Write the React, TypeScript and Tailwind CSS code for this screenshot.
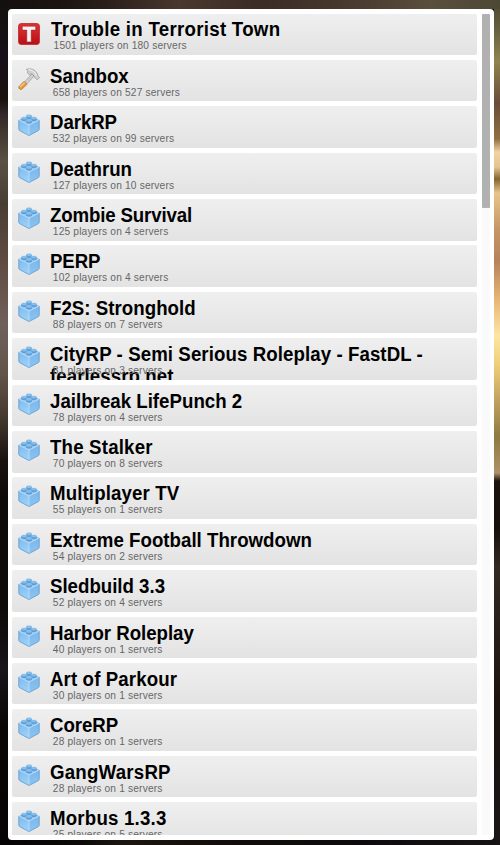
type Game = { name: string; players: number; servers: number; tracking: string; icon?: 'ttt' | 'hammer' };

const games: Game[] = [
  { name: 'Trouble in Terrorist Town', players: 1501, servers: 180, icon: 'ttt', tracking: 'tracking-[0.29px]' },
  { name: 'Sandbox', players: 658, servers: 527, icon: 'hammer', tracking: 'tracking-[-0.03px]' },
  { name: 'DarkRP', players: 532, servers: 99, tracking: 'tracking-[-0.08px]' },
  { name: 'Deathrun', players: 127, servers: 10, tracking: 'tracking-[0px]' },
  { name: 'Zombie Survival', players: 125, servers: 4, tracking: 'tracking-[-0.16px]' },
  { name: 'PERP', players: 102, servers: 4, tracking: 'tracking-[-0.13px]' },
  { name: 'F2S: Stronghold', players: 88, servers: 7, tracking: 'tracking-[0.03px]' },
  { name: 'CityRP - Semi Serious Roleplay - FastDL - fearlessrp.net', players: 81, servers: 3, tracking: 'tracking-[0.08px]' },
  { name: 'Jailbreak LifePunch 2', players: 78, servers: 4, tracking: 'tracking-[0.01px]' },
  { name: 'The Stalker', players: 70, servers: 8, tracking: 'tracking-[0.19px]' },
  { name: 'Multiplayer TV', players: 55, servers: 1, tracking: 'tracking-[0.12px]' },
  { name: 'Extreme Football Throwdown', players: 54, servers: 2, tracking: 'tracking-[0.02px]' },
  { name: 'Sledbuild 3.3', players: 52, servers: 4, tracking: 'tracking-[-0.01px]' },
  { name: 'Harbor Roleplay', players: 40, servers: 1, tracking: 'tracking-[-0.03px]' },
  { name: 'Art of Parkour', players: 30, servers: 1, tracking: 'tracking-[0.12px]' },
  { name: 'CoreRP', players: 28, servers: 1, tracking: 'tracking-[-0.07px]' },
  { name: 'GangWarsRP', players: 28, servers: 1, tracking: 'tracking-[0.22px]' },
  { name: 'Morbus 1.3.3', players: 25, servers: 5, tracking: 'tracking-[0.2px]' },
];

function BrickIcon() {
  return (
    <svg viewBox="0 0 22 22" className="h-[22px] w-[22px]">
      <defs>
        <linearGradient id="brickLeft" x2="0.3" y2="1">
          <stop stopColor="#7db9ec" />
          <stop offset="1" stopColor="#9bd0f8" />
        </linearGradient>
        <linearGradient id="brickRight" x2="0" y2="1">
          <stop stopColor="#7ab6ea" />
          <stop offset="1" stopColor="#8cc5f3" />
        </linearGradient>
      </defs>
      <path d="M.8 5.8 11 10.8v10.7L1.6 16.6Q.8 16.2.8 15Z" fill="url(#brickLeft)" />
      <path d="M21.2 5.8 11 10.8v10.7l9.4-4.9q.8-.4.8-1.6Z" fill="url(#brickRight)" />
      <path d="M.8 5.8 11 1.4l10.2 4.4L11 10.8Z" fill="#92c7f1" />
      <path d="M.8 6v9.4q0 .8.8 1.2L11 21.5l9.4-4.9q.8-.4.8-1.2V6" fill="none" stroke="#659fd1" strokeWidth=".9" />
      <path d="M1.2 6.2 11 11l9.8-4.8M11 11v9.8" fill="none" stroke="#b3dafa" strokeWidth="1" />
      <g fill="#609dd2">
        <path d="M8.1 1.8v2.1c0 1.5 5.8 1.5 5.8 0V1.8z" />
        <path d="M3.3 4V6.1c0 1.5 5.8 1.5 5.8 0V4z" />
        <path d="M12.9 4V6.1c0 1.5 5.8 1.5 5.8 0V4z" />
        <path d="M8.1 6.3v2.1c0 1.5 5.8 1.5 5.8 0V6.3z" />
      </g>
      <g fill="#86bfee">
        <ellipse cx="11" cy="1.9" rx="2.9" ry="1.3" />
        <ellipse cx="6.2" cy="4.1" rx="2.9" ry="1.3" />
        <ellipse cx="15.8" cy="4.1" rx="2.9" ry="1.3" />
        <ellipse cx="11" cy="6.4" rx="2.9" ry="1.3" />
      </g>
    </svg>
  );
}

function HammerIcon() {
  return (
    <svg viewBox="0 0 22 22" className="h-[22px] w-[22px]">
      <path d="m6.3 14.2 7.6-8.3 2.3 2-7.6 8.3Z" fill="#d0d0d0" stroke="#8b8b8b" strokeWidth=".6" />
      <path d="m.7 18.9 5.3-5.6 3.2 2.9-5.5 5.2c-1 .9-3.9-1.3-3-2.5Z" fill="#e39a3c" stroke="#a8743a" strokeWidth=".6" />
      <path d="m2.3 18.9 4.4-4.3" stroke="#ffd083" strokeWidth="1.1" />
      <path d="M8.3 1.3c3-.9 6.2-.5 8.4 1.2l2.2 2.2.8 2.6 1.8 2.2-2.2 2.3-2.6-2.2-.4-1.4-2.6-2.4-2.3 1.1-2-2.1c.8-1.5-.1-2.8-1.1-3.5Z" fill="#cfd0d1" stroke="#8a8c8f" strokeWidth=".6" />
      <path d="M10.5 1.6c3.6.2 5.7 2 6.9 3.7l1 2.5" fill="none" stroke="#f7f7f7" strokeWidth="1" />
    </svg>
  );
}

function TerrorIcon() {
  return (
    <svg viewBox="0 0 22 22" className="h-[22px] w-[22px]">
      <defs>
        <linearGradient id="red" x2="0" y2="1">
          <stop stopColor="#df3236" />
          <stop offset="1" stopColor="#b80f14" />
        </linearGradient>
      </defs>
      <rect x=".6" y=".6" width="20.8" height="20.8" rx="2.5" fill="url(#red)" stroke="#c0282c" strokeWidth=".9" />
      <path d="M4.3 3.2h13.4v3.9h-4.5v11.8H8.8V7.1H4.3Z" fill="#f7f1f1" stroke="#951a1d" strokeWidth=".5" />
    </svg>
  );
}

const icons = { ttt: TerrorIcon, hammer: HammerIcon, brick: BrickIcon };

function GameRow({ game }: { game: Game }) {
  const Icon = icons[game.icon ?? 'brick'];
  const first = game.icon === 'ttt';
  const iconMargin = first ? 'mt-[4px]' : game.icon === 'hammer' ? 'mt-[3.5px]' : 'mt-[3px]';
  return (
    <div className="flex h-[41.5px] shrink-0 overflow-hidden rounded-[2px] bg-linear-to-b from-[#efefef] to-[#e3e3e3] pt-[5px] pl-[5.5px]">
      <div className={`${iconMargin} mr-[10.5px] h-[22px] w-[22px] shrink-0`}>
        <Icon />
      </div>
      <div className={`w-[400px] ${first ? '-mt-[1px] pl-[0.8px]' : ''}`}>
        <div className={`h-[22px] origin-left scale-x-[0.963] text-[19.4px] leading-[22px] font-bold text-black ${game.tracking}`}>
          {game.name}
        </div>
        <div className="relative pl-[2.8px] text-[10.2px] leading-[11px] tracking-[0.17px] text-[#666]">
          {`${game.players} players on ${game.servers} servers`}
        </div>
      </div>
    </div>
  );
}

export default function App() {
  return (
    <div className="flex h-[845px] w-[500px] flex-col overflow-hidden bg-[#080609] font-['Liberation_Sans',Arial,sans-serif]">
      <div className="h-[8.5px] shrink-0 bg-[linear-gradient(to_right,#14100f_0px,#1b1412_60px,#2b201b_110px,#4a382e_180px,#3b2c24_260px,#46382d_340px,#5a4e3e_430px,#4d4833_500px)]" />
      <div className="flex h-[831.2px] shrink-0">
        <div className="w-[7.5px] shrink-0 bg-[linear-gradient(to_bottom,#14110f_0px,#17101a_50px,#1a110d_90px,#33272a_105px,#453931_125px,#5a5043_152px,#493e32_195px,#5f4a40_250px,#70605a_315px,#62544a_365px,#44382d_410px,#1a1310_450px,#0e0a08_490px,#0d0a09_600px,#17151a_660px,#090605_720px,#060404_831px)]" />
        <main className="flex w-[486.5px] shrink-0 justify-between rounded-[4px] bg-white py-[5px] pr-[4px] pl-[4.5px]">
          <div className="flex h-[821px] w-[465px] flex-col gap-[4.9px] overflow-hidden">
            {games.map((game) => (
              <GameRow key={game.name} game={game} />
            ))}
          </div>
          <div className="h-[821px] w-[8px] bg-[#fafafa]">
            <div className="h-[194.5px] rounded-[1px] bg-[#b1b1b1]" />
          </div>
        </main>
        <div className="grow bg-[linear-gradient(to_bottom,#544e36_0px,#6b6440_24px,#8f8450_52px,#6b4c38_94px,#8f7043_130px,#f2d2a4_143px,#e5c48f_158px,#846530_170px,#e8c48c_184px,#c59665_220px,#b5835a_252px,#e8b878_292px,#fde5a3_327px,#f0cf78_355px,#c0a060_392px,#8f7a40_427px,#b09068_464px,#1a120b_472px,#17110b_520px,#332a22_558px,#1c140d_690px,#1a1718_831px)]" />
      </div>
      <div className="grow bg-[linear-gradient(to_right,#050304_0px,#0c0908_80px,#1c150f_120px,#120d0a_220px,#0d0a0d_360px,#171315_500px)]" />
    </div>
  );
}
